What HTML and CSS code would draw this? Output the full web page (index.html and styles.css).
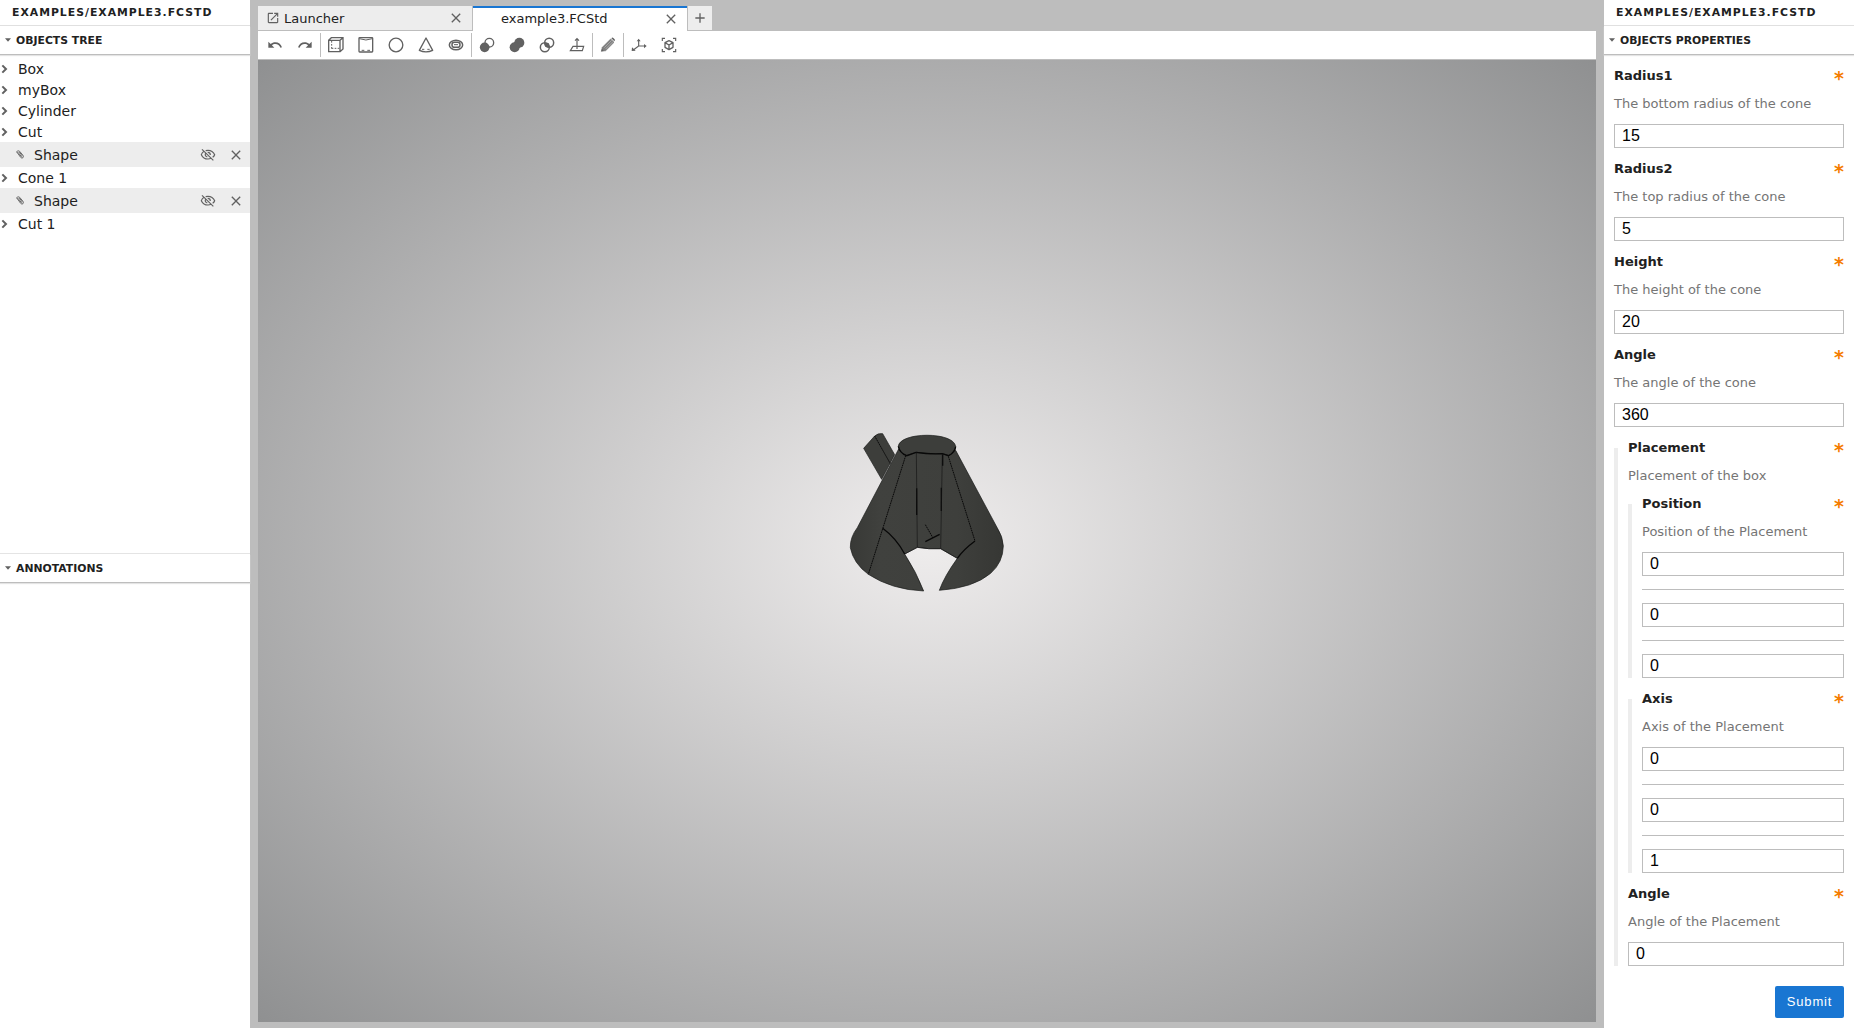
FILE: index.html
```html
<!DOCTYPE html>
<html lang="en">
<head>
<meta charset="utf-8">
<title>example3.FCStd</title>
<link rel="stylesheet" href="styles.css">
</head>
<body>
<svg class="defs" width="0" height="0">
  <symbol id="close" viewBox="0 0 24 24"><path d="M19 6.41L17.59 5 12 10.59 6.41 5 5 6.41 10.59 12 5 17.59 6.41 19 12 13.41 17.59 19 19 17.59 13.41 12z"/></symbol>
  <symbol id="chevron" viewBox="0 0 24 30"><path d="M7 4l11 11L7 26" fill="none" stroke="#616161" stroke-width="6"/></symbol>
  <symbol id="caret" viewBox="0 0 18 12"><path d="M0 1h18L9 11z"/></symbol>
  <symbol id="clip" viewBox="0 0 24 27"><g fill="none" stroke="#6a6a6a" stroke-width="3" stroke-linecap="round"><path d="M3 7l11 15q4 4 7 1t0-7L11 4Q7 1 4 3t-1 4"/><path d="M7 8l9 12M10 6l9 12"/></g></symbol>
  <symbol id="hidden" viewBox="0 0 48 42"><g fill="none" stroke="#616161" stroke-width="3.6"><path d="M12 10Q6 14 4 20q6 13 20 13 5 0 9-2M17 8q4-1 7-1 14 0 20 13-2 5-6 8"/><path d="M17 15q-4 9 5 12M23 13q8 0 8 8"/><path d="M6 4l34 33"/></g></symbol>
</svg>
<div class="app">
  <aside class="panel">
    <header class="panel-title">EXAMPLES/EXAMPLE3.FCSTD</header>
    <section class="tree-section">
      <h2 class="section-title"><svg class="caret"><use href="#caret"/></svg>OBJECTS TREE</h2>
      <ul class="tree">
        <li class="node"><svg class="chevron"><use href="#chevron"/></svg>Box</li>
        <li class="node"><svg class="chevron"><use href="#chevron"/></svg>myBox</li>
        <li class="node"><svg class="chevron"><use href="#chevron"/></svg>Cylinder</li>
        <li class="node"><svg class="chevron"><use href="#chevron"/></svg>Cut</li>
        <li class="leaf"><svg class="clip"><use href="#clip"/></svg><span class="leaf-name">Shape</span><svg class="eye"><use href="#hidden"/></svg><svg class="remove"><use href="#close"/></svg></li>
        <li class="node"><svg class="chevron"><use href="#chevron"/></svg>Cone 1</li>
        <li class="leaf"><svg class="clip"><use href="#clip"/></svg><span class="leaf-name">Shape</span><svg class="eye"><use href="#hidden"/></svg><svg class="remove"><use href="#close"/></svg></li>
        <li class="node"><svg class="chevron"><use href="#chevron"/></svg>Cut 1</li>
      </ul>
    </section>
    <section class="notes-section">
      <h2 class="section-title"><svg class="caret"><use href="#caret"/></svg>ANNOTATIONS</h2>
    </section>
  </aside>

  <main class="dock">
    <nav class="tabs">
      <div class="tab">
        <svg class="tab-icon" viewBox="0 0 24 24"><path d="M19 19H5V5h7V3H5c-1.110 0-2 .9-2 2v14c0 1.100.890 2 2 2h14c1.100 0 2-.9 2-2v-7h-2v7zM14 3v2h3.590l-9.830 9.830 1.410 1.410L19 6.410V10h2V3h-7z"/></svg>
        <span class="tab-name">Launcher</span><svg class="tab-close"><use href="#close"/></svg>
      </div>
      <div class="tab current"><span class="tab-name">example3.FCStd</span><svg class="tab-close"><use href="#close"/></svg></div>
      <div class="tab-add"><svg viewBox="0 0 24 24"><path d="M19 13h-6v6h-2v-6H5v-2h6V5h2v6h6v2z"/></svg></div>
    </nav>
    <div class="toolbar">
      <button class="tool"><svg class="small" viewBox="0 0 24 24"><path d="M12.500 8c-2.650 0-5.050.990-6.900 2.600L2 7v9h9l-3.620-3.620c1.390-1.160 3.160-1.880 5.120-1.880 3.540 0 6.550 2.310 7.600 5.500l2.370-.780C21.080 11.030 17.150 8 12.500 8z"/></svg></button>
      <button class="tool"><svg class="small" viewBox="0 0 24 24"><path d="M18.400 10.600C16.550 8.990 14.150 8 11.500 8c-4.650 0-8.580 3.030-9.960 7.220L3.900 16c1.050-3.190 4.050-5.500 7.600-5.500 1.950 0 3.730.720 5.120 1.880L13 16h9V7l-3.600 3.600z"/></svg></button>
      <i class="rule"></i>
      <button class="tool"><svg class="line" viewBox="0 0 60 60"><path d="M8 16h34v34H8zM8 16l8-8h35v34l-9 8M42 16l9-8" stroke-width="4"/><path d="M17 18v23M17 40h24" stroke-width="3" stroke-dasharray="5 4"/></svg></button>
      <button class="tool"><svg class="line" viewBox="0 0 60 60"><rect x="9" y="8" width="41" height="43" rx="2" stroke-width="4"/><path d="M10 11q20 8 39 0" stroke-width="3"/><path d="M17 46h8M34 46h8" stroke-width="3"/></svg></button>
      <button class="tool"><svg class="line" viewBox="0 0 60 60"><circle cx="30" cy="30" r="20.500" stroke-width="4"/></svg></button>
      <button class="tool"><svg class="line" viewBox="0 0 60 60"><path d="M30 9L10 46q20 9 40 0z" stroke-width="4" stroke-linejoin="round"/><path d="M18 43h7M34 43h7" stroke-width="3"/></svg></button>
      <button class="tool"><svg class="line" viewBox="0 0 60 60"><ellipse cx="30" cy="30" rx="20" ry="14" stroke-width="4.500"/><rect x="18" y="22" width="24" height="15" rx="7" stroke-width="4.500"/><path d="M24 29h12" stroke-width="3"/></svg></button>
      <i class="rule"></i>
      <button class="tool"><svg class="line" viewBox="0 0 60 60"><circle cx="37" cy="23" r="13" stroke-width="4"/><circle cx="23" cy="37" r="14.500" class="solid"/></svg></button>
      <button class="tool"><svg class="line" viewBox="0 0 60 60"><path d="M22 22L38 38" stroke-width="29"/><circle cx="37" cy="23" r="15" class="solid"/><circle cx="23" cy="37" r="15" class="solid"/></svg></button>
      <button class="tool"><svg class="line" viewBox="0 0 60 60"><path d="M23 23A14 14 0 0 1 37 37A14 14 0 0 1 23 23z" class="solid"/><circle cx="36.500" cy="23.500" r="13.500" stroke-width="4.500"/><circle cx="23.500" cy="36.500" r="13.500" stroke-width="4.500"/><circle cx="30" cy="30" r="7" class="solid"/></svg></button>
      <button class="tool"><svg class="line" viewBox="0 0 60 60"><path d="M18 34L10 47h36l4-13zM30 42V13M24 17l6-6 6 6" stroke-width="3.500"/></svg></button>
      <i class="rule"></i>
      <button class="tool"><svg class="line" viewBox="0 0 60 60"><path d="M10 49l3-12 25-25 10 10-25 25z" class="pencil"/><path d="M40 10q3-4 6-1l4 4q2 3-1 6z" class="solid"/><path d="M19 38l22-22M23 42l22-22" stroke-width="1.500" class="gleam"/><path d="M10 49l2-7 5 5z" class="solid"/></svg></button>
      <i class="rule"></i>
      <button class="tool"><svg class="line" viewBox="0 0 60 60"><path d="M29 15v18L14 44M29 33h19" stroke-width="3.500"/><path d="M23 19l6-8 6 8zM45 27l8 6-8 7zM9 37l11 10-12 1z" class="solid"/></svg></button>
      <button class="tool"><svg class="line" viewBox="0 0 60 60"><path d="M10 18v-8h8M42 10h8v8M50 42v8h-8M18 50h-8v-8" stroke-width="3.500"/><path d="M30 17l12 6v14l-12 7-12-7V23zM18 23l12 7 12-7M30 30v14" stroke-width="4" stroke-linejoin="round"/></svg></button>
    </div>
    <div class="viewport">
      <svg class="model" viewBox="0 0 570 540">
        <defs>
          <linearGradient id="shade"><stop offset="0" stop-color="#383936"/><stop offset=".2" stop-color="#40413e"/><stop offset=".7" stop-color="#3e3f3c"/><stop offset="1" stop-color="#363734"/></linearGradient>
        </defs>
        <path class="face" d="M101 85L134 48Q144 39 158 41L194 104L155 178z"/>
        <path class="dash" d="M134 48L181 131"/>
        <path class="face cone" d="M206 87L82 323Q60 352 61 383Q70 430 115 463Q185 509 281 513Q259 456 224 402L262 382Q296 388 332 386L382 415Q343 469 328 511Q430 504 482 460Q519 427 520 378Q518 348 502 324L377 91z"/>
        <path class="face" d="M205 79C209 35 373 34 377 80Q376 97 356 107L337 101Q298 103 258 97L230 107Q209 99 205 79z"/>
        <g class="edge">
          <path d="M205 79Q209 99 230 107L258 97Q298 103 337 101L356 107Q374 98 377 80"/>
          <path d="M158 325Q198 354 224 402M435 363Q400 389 382 415M338 103v34"/>
          <path d="M260 205v80M334 203v70M286 365l43-22"/>
        </g>
        <g class="thin"><path d="M259 97L262 382M337 101L332 386M224 402L262 382Q296 388 332 386L382 415"/></g>
        <g class="dash"><path d="M227 107L115 463M355 109L435 363M286 314L309 354"/></g>
      </svg>
    </div>
  </main>

  <aside class="panel">
    <header class="panel-title">EXAMPLES/EXAMPLE3.FCSTD</header>
    <h2 class="section-title"><svg class="caret"><use href="#caret"/></svg>OBJECTS PROPERTIES</h2>
    <form class="form">
      <div class="field"><label>Radius1<b>*</b></label><p>The bottom radius of the cone</p><input value="15"></div>
      <div class="field"><label>Radius2<b>*</b></label><p>The top radius of the cone</p><input value="5"></div>
      <div class="field"><label>Height<b>*</b></label><p>The height of the cone</p><input value="20"></div>
      <div class="field"><label>Angle<b>*</b></label><p>The angle of the cone</p><input value="360"></div>
      <div class="group">
        <label>Placement<b>*</b></label><p>Placement of the box</p>
        <div class="group">
          <label>Position<b>*</b></label><p>Position of the Placement</p>
          <input value="0"><hr><input value="0"><hr><input value="0">
        </div>
        <div class="group">
          <label>Axis<b>*</b></label><p>Axis of the Placement</p>
          <input value="0"><hr><input value="0"><hr><input value="1">
        </div>
        <div class="field"><label>Angle<b>*</b></label><p>Angle of the Placement</p><input value="0"></div>
      </div>
      <button class="submit" type="button">Submit</button>
    </form>
  </aside>
</div>
</body>
</html>
```
FILE: styles.css
```css
* { box-sizing: border-box; }
body {
  margin: 0;
  height: 1028px;
  overflow: hidden;
  background: #bdbdbd;
  color: #212121;
  font: 13px "DejaVu Sans", sans-serif;
}
svg { fill: #616161; flex: none; display: block; }
.defs { position: absolute; }
.app { display: grid; grid-template-columns: 250px 1338px 250px; gap: 8px; height: 1028px; }
.panel { background: #fff; display: flex; flex-direction: column; min-width: 0; }
.panel-title {
  height: 26px;
  padding-left: 12px;
  border-bottom: 1px solid #e0e0e0;
  font-size: 10.833px;
  font-weight: bold;
  line-height: 25px;
  letter-spacing: 1px;
  white-space: nowrap;
}
.section-title {
  display: flex;
  align-items: center;
  height: 29px;
  flex: none;
  margin: 0;
  padding: 0 0 0 5px;
  border-bottom: 1px solid #bdbdbd;
  box-shadow: 0 1px 1px #e4e4e4;
  font-size: 10.833px;
  font-weight: bold;
}
.caret { width: 6px; height: 4px; margin-right: 5px; }

.tree-section { height: 527px; }
.notes-section { border-top: 1px solid #e4e4e4; }
.tree { list-style: none; margin: 3px 0 0; padding: 0; font-size: 14px; }
.node { display: flex; align-items: center; height: 21px; }
.chevron { width: 8px; height: 10px; margin-right: 10px; }
.leaf { display: flex; align-items: center; height: 25px; padding: 0 6px 0 16px; background: #ededed; }
.clip { width: 8px; height: 9px; margin-right: 10px; }
.leaf-name { flex: 1; }
.eye { width: 16px; height: 14px; margin-right: 12px; }
.remove { width: 16px; height: 16px; }

.dock { display: flex; flex-direction: column; padding: 6px 0; }
.tabs { display: flex; height: 25px; }
.tab {
  display: flex;
  align-items: center;
  width: 215px;
  padding: 0 8px;
  background: #ededed;
  border-right: 1px solid #bdbdbd;
  border-bottom: 1px solid #bdbdbd;
}
.tab-icon { width: 14px; height: 14px; margin-right: 4px; }
.tab-name { flex: 1; }
.tab-close { width: 16px; height: 16px; }
.current { width: 214px; padding: 0 8px 2px 28px; background: #fff; border: 0; border-top: 2px solid #1976d2; }
.current .tab-close { margin-top: 1px; }
.tab-add {
  display: flex;
  align-items: center;
  justify-content: center;
  width: 25px;
  background: #ededed;
  border-left: 1px solid #bdbdbd;
  border-bottom: 1px solid #bdbdbd;
}
.tab-add svg { width: 16px; height: 16px; }

.toolbar { display: flex; height: 29px; padding: 0 2px; background: #fff; border-bottom: 1px solid #bdbdbd; }
.tool { display: flex; align-items: center; justify-content: center; width: 30px; height: 28px; padding: 0; border: 0; background: none; }
.tool svg { width: 20px; height: 20px; }
.tool .small { width: 16px; height: 16px; }
.rule { width: 1px; height: 24px; margin-top: 2px; background: #bdbdbd; }
.line { fill: none; stroke: #616161; }
.line .solid { fill: #616161; stroke: none; }
.line .pencil { fill: #808080; stroke: #757575; stroke-width: 2; }
.line .gleam { stroke: #d0d0d0; }

.viewport { position: relative; flex: 1; background: radial-gradient(#efeded, #8f9091); }
.model { position: absolute; left: 572px; top: 360px; width: 190px; height: 180px; }
.face { fill: #3d3e3b; stroke: #171816; stroke-width: 2; }
.cone { fill: url(#shade); }
.edge { fill: none; stroke: #080808; stroke-width: 4; }
.thin { fill: none; stroke: #151515; stroke-width: 2; }
.dash { fill: none; stroke: #080808; stroke-width: 3; stroke-dasharray: 5 2; }

.form { display: flex; flex-direction: column; padding: 6px 10px; }
.field, .group { display: flex; flex-direction: column; margin-bottom: 6px; }
label { display: flex; justify-content: space-between; height: 28px; line-height: 30px; font-weight: bold; }
label b { color: #f57c00; font-size: 19px; line-height: 34px; height: 28px; }
p { margin: 0 0 7px; height: 28px; line-height: 30px; color: #757575; white-space: nowrap; }
input {
  width: 100%;
  height: 24px;
  margin: 0;
  padding: 0 7px;
  border: 1px solid #bdbdbd;
  color: #000;
  font: 16px "Liberation Sans", sans-serif;
}
hr { width: 100%; height: 1px; margin: 13px 0; border: 0; background: #bdbdbd; }
.group {
  padding-left: 14px;
  background: linear-gradient(#ededed, #ededed) 0 15px / 4px 100% no-repeat;
}
.group > p:has(+ .group) { margin-bottom: 0; }
.group > .field:last-child { margin-bottom: 0; }
.submit {
  align-self: flex-end;
  width: 69px;
  height: 32px;
  margin-top: 14px;
  padding: 0 0 2px;
  border: 0;
  border-radius: 2px;
  background: #1976d2;
  color: #fff;
  font: 13px "Liberation Sans", sans-serif;
  letter-spacing: 0.8px;
}
```
